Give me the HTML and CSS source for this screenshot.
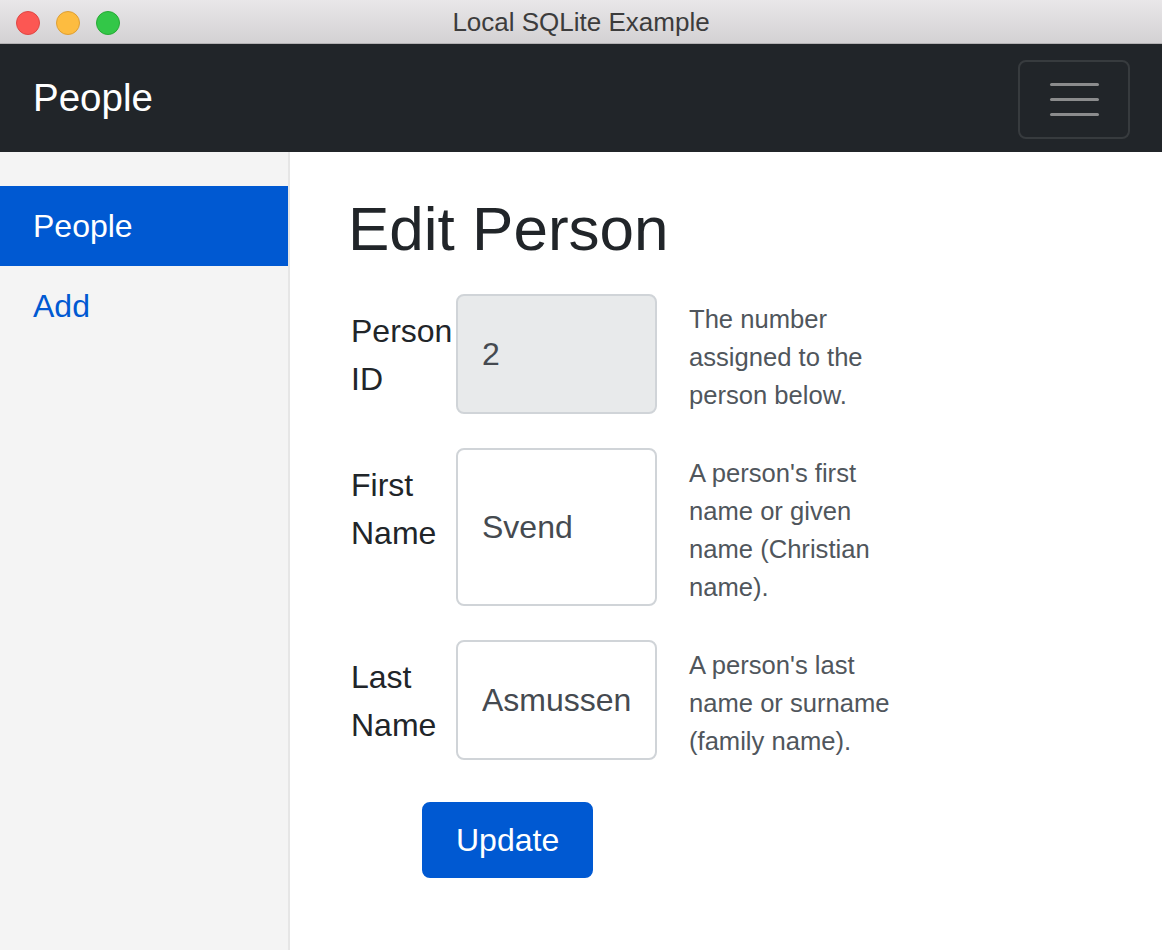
FILE: index.html
```html
<!DOCTYPE html>
<html lang="en">
<head>
<meta charset="utf-8">
<title>Local SQLite Example</title>
<link rel="stylesheet" href="styles.css">
</head>
<body>
<div class="window">
  <header class="titlebar">
    <div class="lights">
      <span class="light red"></span>
      <span class="light yellow"></span>
      <span class="light green"></span>
    </div>
    <div class="title">Local SQLite Example</div>
    <div class="spacer"></div>
  </header>
  <nav class="navbar">
    <a class="brand" href="#">People</a>
    <button class="toggler" type="button" aria-label="Toggle navigation">
      <span class="bar"></span>
      <span class="bar"></span>
      <span class="bar"></span>
    </button>
  </nav>
  <div class="body">
    <aside class="sidebar">
      <a class="nav-item active" href="#">People</a>
      <a class="nav-item" href="#">Add</a>
    </aside>
    <main class="main">
      <h1 class="heading">Edit Person</h1>
      <form class="form">
        <div class="row">
          <label class="label" for="pid">Person ID</label>
          <input class="input readonly" id="pid" type="text" value="2" readonly>
          <p class="help">The number assigned to the person below.</p>
        </div>
        <div class="row">
          <label class="label" for="fname">First Name</label>
          <input class="input" id="fname" type="text" value="Svend">
          <p class="help">A person's first name or given name (Christian name).</p>
        </div>
        <div class="row">
          <label class="label" for="lname">Last Name</label>
          <input class="input" id="lname" type="text" value="Asmussen">
          <p class="help">A person's last name or surname (family name).</p>
        </div>
        <button class="btn" type="button">Update</button>
      </form>
    </main>
  </div>
</div>
</body>
</html>
```

FILE: styles.css
```css
* { box-sizing: border-box; }

html, body {
  margin: 0;
  padding: 0;
  height: 100%;
}

body {
  font-family: "Liberation Sans", Arial, sans-serif;
  color: #212529;
  background: #ffffff;
}

.window {
  display: flex;
  flex-direction: column;
  height: 100vh;
  overflow: hidden;
}

/* macOS title bar */
.titlebar {
  height: 44px;
  flex: none;
  display: grid;
  grid-template-columns: 1fr auto 1fr;
  align-items: center;
  background: linear-gradient(#e9e7e9, #d3d1d3);
  border-bottom: 1px solid #b3b1b3;
}

.lights {
  display: flex;
  gap: 16px;
  padding-left: 16px;
}

.light {
  width: 24px;
  height: 24px;
  border-radius: 50%;
  display: block;
}

.light.red { background: #fc5753; border: 1px solid #df4744; }
.light.yellow { background: #fdbc40; border: 1px solid #de9f34; }
.light.green { background: #33c748; border: 1px solid #27aa35; }

.title {
  font-size: 26px;
  color: #3c3c3c;
  line-height: 45px;
}

/* navbar */
.navbar {
  height: 108px;
  flex: none;
  background: #212529;
  display: flex;
  align-items: center;
  justify-content: space-between;
  padding: 0 32px 0 33px;
}

.brand {
  color: #ffffff;
  text-decoration: none;
  font-size: 38.5px;
  line-height: 60px;
}

.toggler {
  width: 112px;
  height: 79px;
  margin-top: 2px;
  background: transparent;
  border: 2px solid rgba(255, 255, 255, 0.1);
  border-radius: 8px;
  display: flex;
  flex-direction: column;
  align-items: center;
  justify-content: center;
  gap: 12px;
  padding: 0;
}

.bar {
  display: block;
  width: 49px;
  height: 3px;
  border-radius: 2px;
  background: #8b8c8d;
}

/* body */
.body {
  flex: 1;
  display: flex;
  min-height: 0;
}

.sidebar {
  width: 290px;
  flex: none;
  background: #f4f4f4;
  border-right: 2px solid #e6e6e6;
  padding-top: 34px;
  display: flex;
  flex-direction: column;
}

.nav-item {
  display: block;
  padding: 16px 33px;
  font-size: 32px;
  line-height: 48px;
  color: #0059d2;
  text-decoration: none;
}

.nav-item.active {
  background: #0059d2;
  color: #ffffff;
}

.main {
  flex: 1;
  padding: 38px 0 0 58px;
}

.heading {
  margin: 0 0 27px;
  font-size: 62px;
  line-height: 77px;
  font-weight: normal;
  color: #212529;
}

.form {
  display: flex;
  flex-direction: column;
  align-items: flex-start;
}

.row {
  display: flex;
  align-items: stretch;
  margin-bottom: 34px;
}

.row:nth-child(3) { margin-bottom: 42px; }

.label {
  width: 108px;
  flex: none;
  padding: 13px 0 11px 3px;
  font-size: 32px;
  line-height: 48px;
  color: #212529;
}

.input {
  width: 201px;
  flex: none;
  margin: 0;
  padding: 0 24px;
  font-family: inherit;
  font-size: 32px;
  color: #454a50;
  background: #ffffff;
  border: 2px solid #d0d4d8;
  border-radius: 8px;
  outline: none;
}

.input.readonly {
  background: #e8eaeb;
}

.help {
  width: 222px;
  flex: none;
  margin: 0 0 0 32px;
  padding-top: 6px;
  font-size: 25.6px;
  line-height: 38px;
  color: #50565c;
}

.btn {
  margin-left: 74px;
  padding: 12px 32px;
  font-family: inherit;
  font-size: 32px;
  line-height: 48px;
  color: #ffffff;
  background: #0059d2;
  border: 2px solid #0059d2;
  border-radius: 8px;
}
```
